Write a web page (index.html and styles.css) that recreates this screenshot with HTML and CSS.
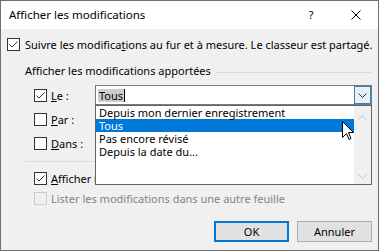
FILE: index.html
```html
<!DOCTYPE html>
<html lang="fr">
<head>
<meta charset="utf-8">
<title>Afficher les modifications</title>
<link rel="stylesheet" href="styles.css">
</head>
<body>
<div class="dialog">
  <div class="titlebar">
    <span class="title">Afficher les modifications</span>
    <span class="help">?</span>
    <span class="close"><svg width="10" height="10" viewBox="0 0 10 10"><path d="M0.5 0.5 L9.5 9.5 M9.5 0.5 L0.5 9.5" stroke="#000" stroke-width="1" fill="none"/></svg></span>
  </div>
  <div class="content">
    <div class="row track">
      <span class="cb checked"><svg width="11" height="11" viewBox="0 0 11 11"><path d="M1.5 5.5 L4 8 L9.5 2.5" stroke="#333" stroke-width="1" fill="none"/></svg></span>
      <span class="lbl">Suivre les modifica<u>t</u>ions au fur et à mesure. Le classeur est partagé.</span>
    </div>
    <div class="group-head">
      <span class="lbl">Afficher les modifications apportées</span>
      <span class="gline"></span>
    </div>
    <div class="row opt le">
      <span class="cb checked"><svg width="11" height="11" viewBox="0 0 11 11"><path d="M1.5 5.5 L4 8 L9.5 2.5" stroke="#333" stroke-width="1" fill="none"/></svg></span>
      <span class="lbl"><u>L</u>e :</span>
      <div class="combo">
        <span class="combo-text"><span class="sel">Tous</span><span class="caret"></span></span>
        <span class="combo-btn"><svg width="9" height="5" viewBox="0 0 9 5"><path d="M0.5 0.5 L4.5 4.5 L8.5 0.5" stroke="#333" stroke-width="1" fill="none"/></svg></span>
      </div>
    </div>
    <div class="row opt par">
      <span class="cb"></span>
      <span class="lbl"><u>P</u>ar :</span>
    </div>
    <div class="row opt dans">
      <span class="cb"></span>
      <span class="lbl"><u>D</u>ans :</span>
    </div>
    <div class="sep"></div>
    <div class="row opt afficher">
      <span class="cb checked"><svg width="11" height="11" viewBox="0 0 11 11"><path d="M1.5 5.5 L4 8 L9.5 2.5" stroke="#333" stroke-width="1" fill="none"/></svg></span>
      <span class="lbl"><u>A</u>fficher les modifications à l'écran</span>
    </div>
    <div class="row opt lister disabled">
      <span class="cb"></span>
      <span class="lbl">Lister les modifications dans une autre feuille</span>
    </div>
    <div class="buttons">
      <span class="btn default">OK</span>
      <span class="btn">Annuler</span>
    </div>
  </div>

  <div class="droplist">
    <div class="items">
      <div class="item">Depuis mon dernier enregistrement</div>
      <div class="item active">Tous</div>
      <div class="item">Pas encore révisé</div>
      <div class="item">Depuis la date du...</div>
    </div>
    <div class="vscroll">
      <svg width="9" height="5" viewBox="0 0 9 5"><path d="M0.5 4.5 L4.5 0.5 L8.5 4.5" stroke="#c2c2c2" stroke-width="1" fill="none"/></svg>
      <svg width="9" height="5" viewBox="0 0 9 5"><path d="M0.5 0.5 L4.5 4.5 L8.5 0.5" stroke="#c2c2c2" stroke-width="1" fill="none"/></svg>
    </div>
  </div>

  <svg class="pointer" width="12" height="20" viewBox="0 0 12 20"><path d="M0.5 0.5 L0.5 16.5 L4.5 12.5 L7 18.5 L9 17.5 L6.5 11.5 L11.5 11.5 Z" fill="#fff" stroke="#000" stroke-width="1" stroke-linejoin="miter"/></svg>
</div>
</body>
</html>
```

FILE: styles.css
```css
* { box-sizing: border-box; }
html, body { margin: 0; padding: 0; }
body {
  width: 379px;
  height: 251px;
  overflow: hidden;
  font-family: "Noto Sans", "Open Sans", sans-serif;
  font-size: 11px;
  color: #000;
  background: #f0f0f0;
}
.dialog {
  position: relative;
  width: 379px;
  height: 251px;
  border: 1px solid #707070;
  background: #f0f0f0;
  display: flex;
  flex-direction: column;
}
.titlebar {
  height: 28px;
  flex: none;
  background: #fff;
  display: flex;
  align-items: center;
  padding-left: 8px;
  font-size: 11.5px;
}
.title { flex: 1; line-height: 16px; }
.help {
  width: 46px;
  text-align: center;
  line-height: 16px;
}
.close {
  width: 44px;
  height: 28px;
  display: flex;
  align-items: center;
  justify-content: center;
}
.close svg { display: block; }
.content {
  flex: 1;
  display: flex;
  flex-direction: column;
  padding: 9px 6px 0 6px;
}
.row {
  display: flex;
  align-items: center;
  height: 13px;
  line-height: 15px;
}
.cb {
  width: 13px;
  height: 13px;
  flex: none;
  border: 1px solid #333;
  background: #fff;
  display: flex;
  align-items: center;
  justify-content: center;
}
.cb svg { display: block; }
.lbl { white-space: nowrap; }
.track .lbl { margin-left: 5px; }
.group-head {
  margin-top: 12px;
  height: 16px;
  display: flex;
  align-items: center;
  padding-left: 18px;
  line-height: 16px;
}
.gline {
  flex: 1;
  height: 1px;
  background: #dcdcdc;
  margin-left: 5px;
  margin-top: 2px;
}
.opt { padding-left: 27px; }
.opt .lbl { margin-left: 4px; }
.le { height: 20px; margin-top: 6px; }
.le .lbl { width: 44px; }
.combo {
  width: 277px;
  height: 20px;
  border: 1px solid #7a7a7a;
  background: #fff;
  display: flex;
  align-items: center;
  padding-left: 2px;
}
.combo-text {
  flex: 1;
  display: flex;
  align-items: center;
  height: 14px;
}
.sel {
  background: #cccccc;
  line-height: 13px;
  padding: 0 1px;
}
.caret {
  width: 1px;
  height: 13px;
  background: #000;
}
.combo-btn {
  width: 17px;
  height: 18px;
  border: 1px solid #3c7fb1;
  background: #e5f1fb;
  display: flex;
  align-items: center;
  justify-content: center;
}
.combo-btn svg { display: block; }
.par { margin-top: 8px; }
.dans { margin-top: 11px; }
.sep {
  margin: 11px 0 0 18px;
  height: 1px;
  background: #dcdcdc;
}
.afficher { margin-top: 10px; }
.lister { margin-top: 7px; }
.disabled .cb { border-color: #cccccc; background: #f0f0f0; }
.disabled .lbl { color: #838383; }
.buttons {
  margin-top: 16px;
  display: flex;
  justify-content: flex-end;
  gap: 8px;
}
.btn {
  width: 75px;
  height: 21px;
  border: 1px solid #adadad;
  background: #e1e1e1;
  display: flex;
  align-items: center;
  justify-content: center;
  line-height: 15px;
}
.btn.default {
  border: 2px solid #0078d7;
}

.droplist {
  position: absolute;
  left: 94px;
  top: 104px;
  width: 277px;
  height: 80px;
  border: 1px solid #646464;
  background: #fff;
  display: flex;
}
.items { flex: 1; }
.item {
  height: 13px;
  line-height: 13px;
  padding-left: 3px;
  white-space: nowrap;
}
.item.active { background: #0078d7; color: #fff; }
.vscroll {
  width: 17px;
  background: #f0f0f0;
  display: flex;
  flex-direction: column;
  justify-content: space-between;
  align-items: center;
  padding: 9px 0 5px;
}
.vscroll svg { display: block; }
.pointer {
  position: absolute;
  left: 341px;
  top: 120px;
}
```
